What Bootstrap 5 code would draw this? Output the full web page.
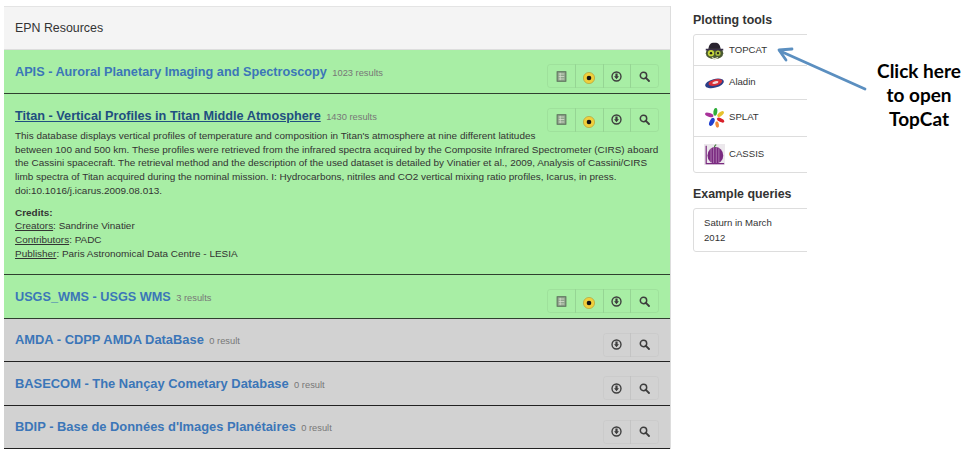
<!DOCTYPE html>
<html lang="en">

<head>
    <meta charset="UTF-8">
    <title>EPN Resources</title>
    <meta name="viewport" content="width=device-width, initial-scale=1.0">
    <link href="https://cdn.jsdelivr.net/npm/bootstrap@5.3.2/dist/css/bootstrap.min.css" rel="stylesheet">
    <style>
        body {
            font-family: "Liberation Sans", Arial, sans-serif;
            background-color: #fff;
            color: #333;
            height: 454px;
            overflow: hidden;
            position: relative;
        }

        .page-wrap {
            padding: 6px 0 0 4px;
        }

        .res-panel {
            width: 667px;
            flex: none;
            border-right: 1px solid #ddd;
        }

        .res-head {
            height: 44px;
            background: #f4f4f4;
            border-top: 1px solid #e4e4e4;
            border-bottom: 1px solid #ddd;
            padding: 1px 11px 0;
            font-size: 12.4px;
            color: #333;
        }

        .res-row {
            padding: 0 11px;
            border-bottom: 1px solid #2f3f2f;
        }

        .res-green {
            background: #a8eea5;
        }

        .res-gray {
            background: #d2d2d2;
            border-bottom-color: #222;
        }

        .res-short {
            height: 44px;
        }

        .res-thin {
            height: 43px;
        }

        .res-open {
            height: 181px;
            padding-top: 9px;
        }

        .res-name {
            margin-bottom: 2px;
        }

        .res-title {
            font-size: 12.7px;
            font-weight: 700;
            color: #3b76b8;
            text-decoration: none;
        }

        .res-gray .res-title {
            font-size: 12.9px;
        }

        .res-title-open {
            color: #1f4f80;
            text-decoration: underline;
        }

        .res-count {
            font-size: 9.3px;
            color: #777;
            margin-left: 1px;
        }

        .res-desc {
            font-size: 9.95px;
            line-height: 13.7px;
            color: #333;
            width: 540px;
            white-space: nowrap;
            margin: -3px 0 0;
        }

        .res-credits {
            font-size: 9.95px;
            line-height: 13.7px;
            margin-top: 8px;
        }

        .res-credits u {
            text-underline-offset: 1px;
        }

        .tool-group {
            flex: none;
            margin-top: 9px;
        }

        .res-open .tool-group {
            margin-top: 5px;
        }

        .tool-btn {
            width: 28.7px;
            height: 24px;
            border: 1px solid rgba(0, 0, 0, 0.05);
            margin-left: -1px;
            display: flex;
            align-items: center;
            justify-content: center;
        }

        .res-gray .tool-btn {
            border-color: rgba(0, 0, 0, 0.03);
        }

        .tool-btn:first-child {
            border-radius: 3px 0 0 3px;
        }

        .tool-btn:last-child {
            border-radius: 0 3px 3px 0;
        }

        .tool-btn svg {
            width: 11px;
            height: 11px;
            margin-top: 0;
        }

        .res-open .tool-btn svg {
            margin-top: -2px;
        }

        .tool-btn .samp-icon,
        .res-open .tool-btn .samp-icon {
            width: 12px;
            height: 12px;
            margin-top: 3px;
        }

        .side-col {
            width: 114px;
            margin-left: 22px;
            flex: none;
            overflow: hidden;
        }

        .side-title {
            font-size: 12.4px;
            font-weight: 700;
            color: #333;
            margin: 6px 0 6px;
            line-height: 16px;
        }

        .side-title-2 {
            margin-top: 13px;
        }

        .side-list {
            width: 130px;
            border: 1px solid #ddd;
            border-radius: 3px;
        }

        .side-item {
            padding-left: 10px;
            font-size: 9.6px;
            color: #333;
            border-bottom: 1px solid #ddd;
        }

        .side-item:last-child {
            border-bottom: 0;
        }

        .item-topcat {
            height: 31px;
            padding-top: 1px;
        }

        .item-aladin {
            height: 34px;
        }

        .item-splat {
            height: 37px;
            padding-bottom: 1px;
        }

        .item-cassis {
            height: 35px;
        }

        .side-item svg {
            width: 21px;
            height: 21px;
            margin-right: 4px;
            flex: none;
        }

        .side-query {
            width: 130px;
            height: 44px;
            border: 1px solid #ddd;
            border-radius: 3px;
            padding: 7px 10px;
            font-size: 9.6px;
            line-height: 14.5px;
        }

        .side-query span {
            display: block;
            width: 80px;
        }

        .arrow-note {
            position: absolute;
            left: 777px;
            top: 44px;
            width: 100px;
            height: 50px;
        }

        .click-note {
            position: absolute;
            left: 859px;
            top: 59px;
            width: 120px;
            text-align: center;
            font-family: Lato, "Liberation Sans", sans-serif;
            font-weight: 700;
            font-size: 19px;
            line-height: 24px;
            color: #000;
        }
    </style>
</head>

<body>
    <svg width="0" height="0" class="position-absolute">
        <defs>
            <symbol id="ic-list" viewBox="0 0 12 12">
                <rect x="1.2" y="0.8" width="9.6" height="10.4" fill="#8fa48c" stroke="#566656" stroke-width="1" />
                <path d="M3 3.3h6M3 6h6M3 8.7h6M4.6 2v8" stroke="#d4dccb" stroke-width="0.9" fill="none" />
            </symbol>
            <symbol id="ic-samp" viewBox="0 0 12 12">
                <circle cx="6" cy="6" r="5.6" fill="#f0cf3c" stroke="#b5a23a" stroke-width="0.7" />
                <circle cx="6" cy="6" r="2.3" fill="#141414" />
            </symbol>
            <symbol id="ic-down" viewBox="0 0 12 12">
                <circle cx="6" cy="6" r="4.9" fill="none" stroke="#3d3d3d" stroke-width="1.5" />
                <path d="M4.8 2.6h2.4v3.2h1.5L6 9 3.3 5.8h1.5z" fill="#3d3d3d" />
            </symbol>
            <symbol id="ic-search" viewBox="0 0 12 12">
                <circle cx="4.9" cy="4.9" r="3.5" fill="none" stroke="#3d3d3d" stroke-width="1.6" />
                <path d="M7.5 7.5l3.4 3.4" stroke="#3d3d3d" stroke-width="2" stroke-linecap="round" />
            </symbol>
        </defs>
    </svg>

    <div class="page-wrap d-flex align-items-start">
        <div class="res-panel">
            <div class="res-head d-flex align-items-center">EPN Resources</div>

            <div class="res-row res-green res-short d-flex justify-content-between align-items-center">
                <div class="res-name"><a href="#" class="res-title">APIS - Auroral Planetary Imaging and Spectroscopy</a> <span class="res-count">1023 results</span></div>
                <div class="tool-group d-flex">
                    <div class="tool-btn"><svg><use href="#ic-list" /></svg></div>
                    <div class="tool-btn"><svg class="samp-icon"><use href="#ic-samp" /></svg></div>
                    <div class="tool-btn"><svg><use href="#ic-down" /></svg></div>
                    <div class="tool-btn"><svg><use href="#ic-search" /></svg></div>
                </div>
            </div>

            <div class="res-row res-green res-open">
                <div class="d-flex justify-content-between align-items-start">
                    <div><a href="#" class="res-title res-title-open">Titan - Vertical Profiles in Titan Middle Atmosphere</a> <span class="res-count">1430 results</span></div>
                    <div class="tool-group d-flex">
                        <div class="tool-btn"><svg><use href="#ic-list" /></svg></div>
                        <div class="tool-btn"><svg class="samp-icon"><use href="#ic-samp" /></svg></div>
                        <div class="tool-btn"><svg><use href="#ic-down" /></svg></div>
                        <div class="tool-btn"><svg><use href="#ic-search" /></svg></div>
                    </div>
                </div>
                <p class="res-desc">This database displays vertical profiles of temperature and composition in Titan's atmosphere at nine different latitudes<br>between 100 and 500 km. These profiles were retrieved from the infrared spectra acquired by the Composite Infrared Spectrometer (CIRS) aboard<br>the Cassini spacecraft. The retrieval method and the description of the used dataset is detailed by Vinatier et al., 2009, Analysis of Cassini/CIRS<br>limb spectra of Titan acquired during the nominal mission. I: Hydrocarbons, nitriles and CO2 vertical mixing ratio profiles, Icarus, in press.<br>doi:10.1016/j.icarus.2009.08.013.</p>
                <div class="res-credits">
                    <strong>Credits:</strong><br>
                    <u>Creators</u>: Sandrine Vinatier<br>
                    <u>Contributors</u>: PADC<br>
                    <u>Publisher</u>: Paris Astronomical Data Centre - LESIA
                </div>
            </div>

            <div class="res-row res-green res-short d-flex justify-content-between align-items-center">
                <div class="res-name"><a href="#" class="res-title">USGS_WMS - USGS WMS</a> <span class="res-count">3 results</span></div>
                <div class="tool-group d-flex">
                    <div class="tool-btn"><svg><use href="#ic-list" /></svg></div>
                    <div class="tool-btn"><svg class="samp-icon"><use href="#ic-samp" /></svg></div>
                    <div class="tool-btn"><svg><use href="#ic-down" /></svg></div>
                    <div class="tool-btn"><svg><use href="#ic-search" /></svg></div>
                </div>
            </div>

            <div class="res-row res-gray res-thin d-flex justify-content-between align-items-center">
                <div class="res-name"><a href="#" class="res-title">AMDA - CDPP AMDA DataBase</a> <span class="res-count">0 result</span></div>
                <div class="tool-group d-flex">
                    <div class="tool-btn"><svg><use href="#ic-down" /></svg></div>
                    <div class="tool-btn"><svg><use href="#ic-search" /></svg></div>
                </div>
            </div>

            <div class="res-row res-gray res-short d-flex justify-content-between align-items-center">
                <div class="res-name"><a href="#" class="res-title">BASECOM - The Nançay Cometary Database</a> <span class="res-count">0 result</span></div>
                <div class="tool-group d-flex">
                    <div class="tool-btn"><svg><use href="#ic-down" /></svg></div>
                    <div class="tool-btn"><svg><use href="#ic-search" /></svg></div>
                </div>
            </div>

            <div class="res-row res-gray res-thin d-flex justify-content-between align-items-center">
                <div class="res-name"><a href="#" class="res-title">BDIP - Base de Données d'Images Planétaires</a> <span class="res-count">0 result</span></div>
                <div class="tool-group d-flex">
                    <div class="tool-btn"><svg><use href="#ic-down" /></svg></div>
                    <div class="tool-btn"><svg><use href="#ic-search" /></svg></div>
                </div>
            </div>
        </div>

        <div class="side-col">
            <div class="side-title">Plotting tools</div>
            <div class="side-list">
                <div class="side-item item-topcat d-flex align-items-center">
                    <svg viewBox="0 0 24 24">
                        <ellipse cx="12" cy="15" rx="10" ry="7" fill="#4b5a34" />
                        <path d="M5 10c1-5 2-7 7-7s6 2 7 7z" fill="#2a2430" />
                        <path d="M2 10h20v2H2z" fill="#3a2f4a" />
                        <circle cx="8" cy="15" r="3.6" fill="#c5d53a" />
                        <circle cx="16" cy="15" r="3" fill="#a9bd3e" />
                        <circle cx="8" cy="15" r="1.4" fill="#1b1b1b" />
                        <circle cx="16" cy="15" r="1.2" fill="#1b1b1b" />
                        <path d="M9 20l3 1.5 4-1.5" stroke="#e6e6d0" stroke-width="1.5" fill="none" />
                    </svg>
                    TOPCAT
                </div>
                <div class="side-item item-aladin d-flex align-items-center">
                    <svg viewBox="0 0 24 24">
                        <ellipse cx="12" cy="13" rx="11" ry="5" fill="#2b3f88" transform="rotate(-14 12 13)" />
                        <ellipse cx="13" cy="12" rx="8" ry="3.6" fill="#d8303a" transform="rotate(-14 13 12)" />
                        <ellipse cx="13" cy="12" rx="3.6" ry="1.5" fill="#f3d9d9" transform="rotate(-14 13 12)" />
                    </svg>
                    Aladin
                </div>
                <div class="side-item item-splat d-flex align-items-center">
                    <svg viewBox="0 0 24 24">
                        <ellipse cx="13" cy="5.5" rx="2.2" ry="4.5" fill="#2fae3a" transform="rotate(8 13 5.5)" />
                        <ellipse cx="19" cy="8" rx="2.2" ry="4.5" fill="#e6c22e" transform="rotate(50 19 8)" />
                        <ellipse cx="19" cy="15" rx="2.2" ry="4.5" fill="#d8202a" transform="rotate(115 19 15)" />
                        <ellipse cx="15" cy="20" rx="2" ry="3.6" fill="#f08a3c" transform="rotate(170 15 20)" />
                        <ellipse cx="9" cy="17" rx="2.6" ry="5" fill="#1f3fd0" transform="rotate(25 9 17)" />
                        <ellipse cx="6" cy="9" rx="2.2" ry="5" fill="#a9329a" transform="rotate(-70 6 9)" />
                    </svg>
                    SPLAT
                </div>
                <div class="side-item item-cassis d-flex align-items-center">
                    <svg viewBox="0 0 24 24">
                        <rect width="24" height="24" fill="#ece8ec" />
                        <ellipse cx="13" cy="13" rx="9" ry="9.5" fill="#7a2a80" />
                        <path d="M8 5v17M11 4v19M14 4v19M17 5v17" stroke="#b98abc" stroke-width="0.9" />
                        <path d="M12 4c0-2 1-3 2-3" stroke="#3f7a3a" stroke-width="1.3" fill="none" />
                        <path d="M2.5 2v20.5H23" stroke="#7a2a80" stroke-width="1.4" fill="none" />
                    </svg>
                    CASSIS
                </div>
            </div>
            <div class="side-title side-title-2">Example queries</div>
            <div class="side-query"><span>Saturn in March 2012</span></div>
        </div>
    </div>

    <svg class="arrow-note" viewBox="0 0 100 50">
        <path d="M88 45L3 7" stroke="#5b8fc0" stroke-width="2.8" stroke-linecap="round" fill="none" />
        <path d="M2 6L15 5M2 6L9 16" stroke="#5b8fc0" stroke-width="2.8" stroke-linecap="round" fill="none" />
    </svg>
    <div class="click-note">Click here<br>to open<br>TopCat</div>

    <script src="https://cdn.jsdelivr.net/npm/bootstrap@5.3.2/dist/js/bootstrap.bundle.min.js"></script>
</body>

</html>
